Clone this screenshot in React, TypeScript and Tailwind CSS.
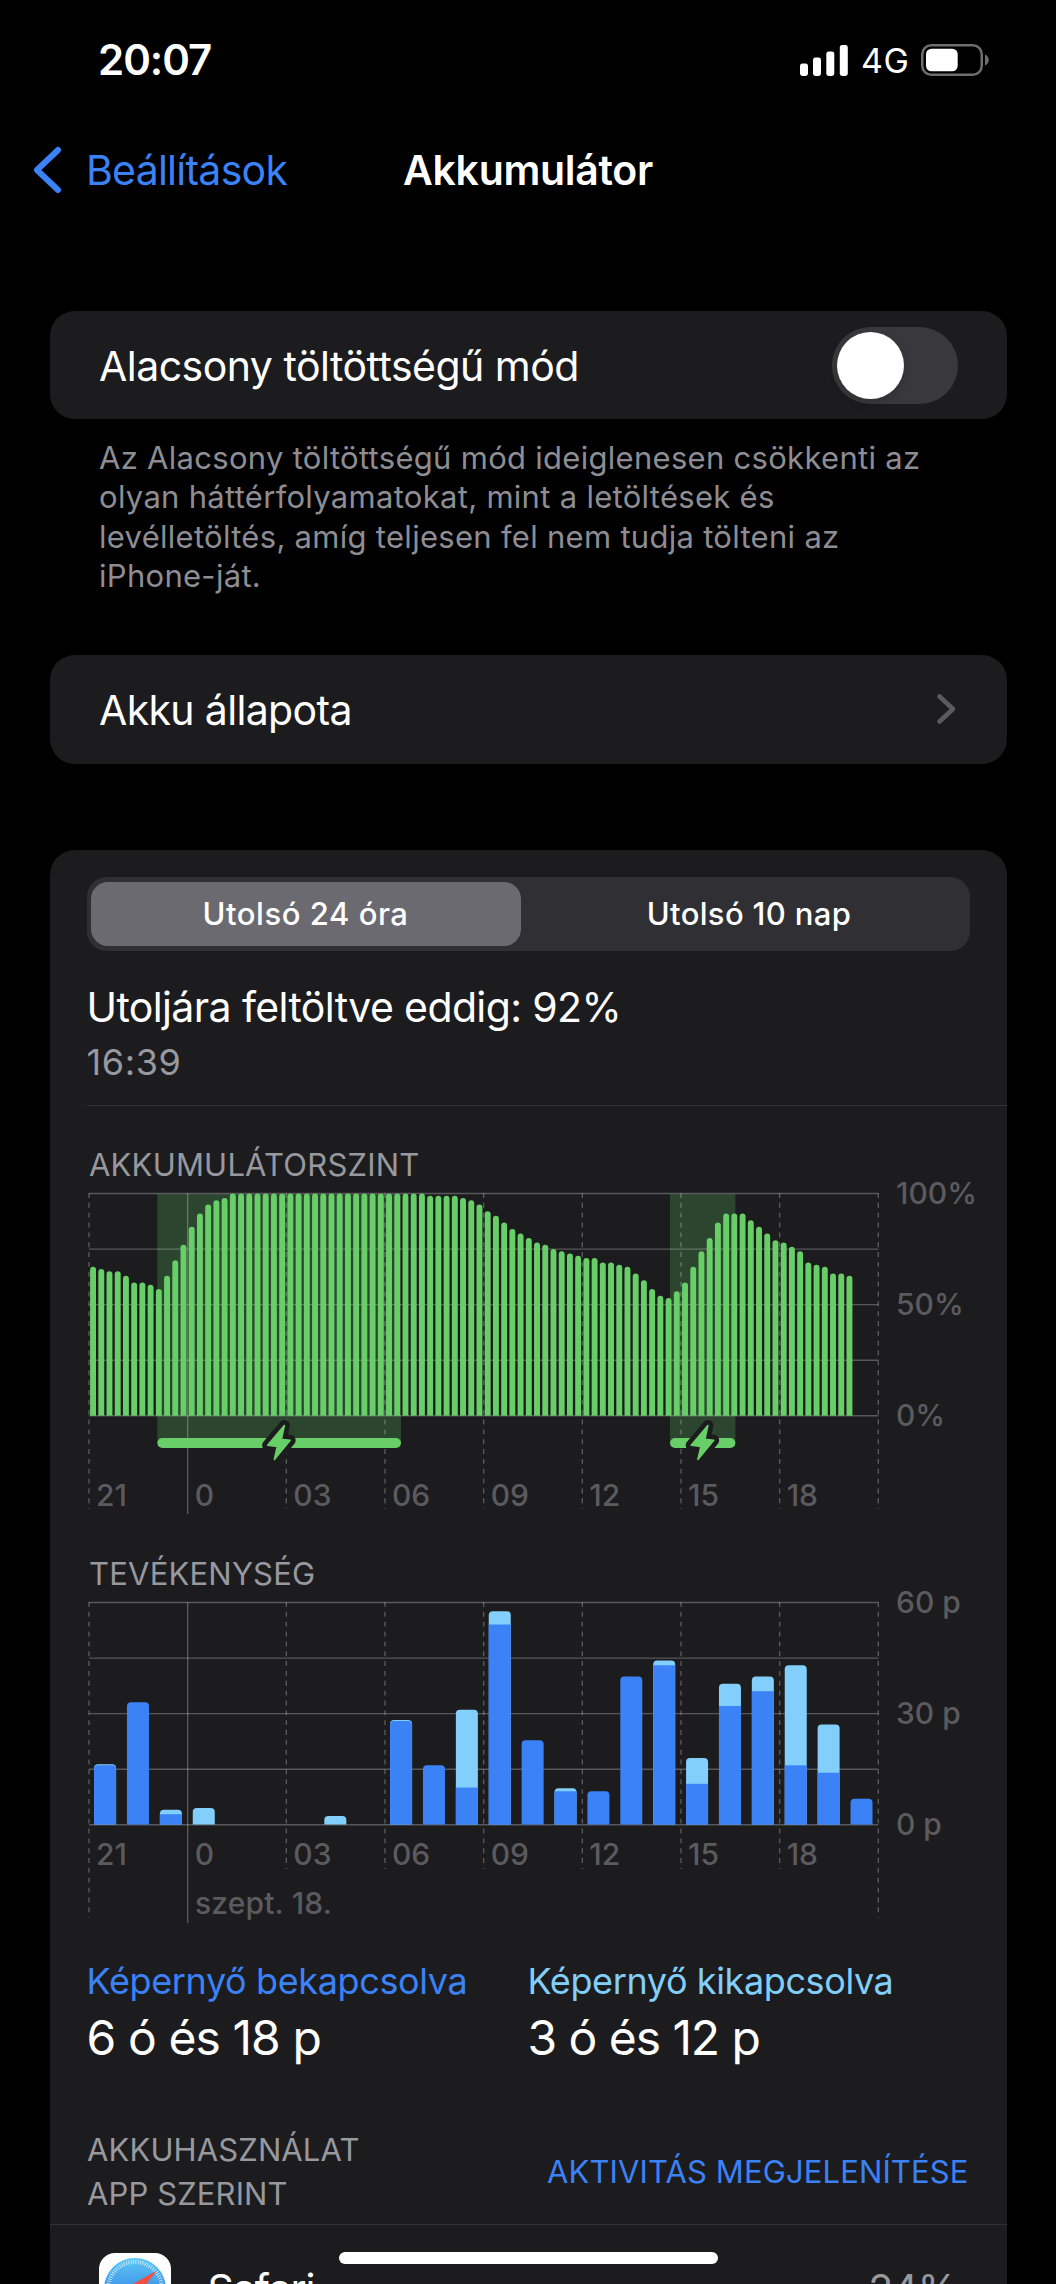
import { ReactNode } from "react";

const PLOT_W = 789.3;
const PLOT_H = 222.3;
const COLUMN = PLOT_W / 8;

const hours = ["21", "0", "03", "06", "09", "12", "15", "18"];

// battery level in percent, one value per 15 minutes
const levels = [
  67, 66, 65, 65, 63, 60, 60, 59, 57, 63, 70, 77, 85, 91, 95, 97, 98, 100, 100,
  100, 100, 100, 100, 100, 100, 100, 100, 100, 100, 100, 100, 100, 100, 100,
  100, 100, 100, 100, 100, 100, 100, 99, 99, 99, 99, 98, 97, 95, 92, 90, 87, 84,
  82, 80, 78, 77, 75, 74, 73, 72, 71, 71, 69, 69, 68, 67, 64, 61, 57, 54, 53,
  56, 60, 67, 74, 80, 87, 91, 91, 91, 88, 85, 82, 79, 78, 76, 74, 69, 68, 67,
  64, 64, 63,
];

const charging = [
  { from: 68.3, to: 312 },
  { from: 581, to: 646.4 },
];

// minutes per hour: [screen on, screen off]
const activity = [
  [16, 0.3],
  [33, 0],
  [2.8, 1.2],
  [0, 4.5],
  [0, 0],
  [0, 0],
  [0, 0],
  [0, 2.3],
  [0, 0],
  [28, 0.2],
  [16, 0],
  [10, 21],
  [54, 3.6],
  [22.8, 0],
  [9, 0.8],
  [9, 0],
  [40, 0],
  [43, 1.3],
  [11, 7],
  [32, 6],
  [36, 4],
  [16, 27],
  [14, 13],
  [7, 0],
];

const StatusBar = () => (
  <div className="flex h-[120px] items-center pl-[98px] pr-[67px]">
    <span className="text-[42px] font-semibold leading-none tracking-[-1.04px]">
      20:07
    </span>
    <svg className="ml-auto h-[31px] w-12" viewBox="0 0 48 31" fill="white">
      <rect x="0" y="18.5" width="8" height="12.5" rx="2.4" />
      <rect x="13" y="12.5" width="8" height="18.5" rx="2.4" />
      <rect x="26.3" y="6.5" width="8" height="24.5" rx="2.4" />
      <rect x="39.8" y="0" width="8" height="31" rx="2.4" />
    </svg>
    <span className="ml-[13px] w-[60px] pt-0.5 text-[34px] leading-none tracking-[0.6px]">
      4G
    </span>
    <svg className="h-8 w-[68px]" viewBox="0 0 68 32">
      <rect
        x="1.25"
        y="1.25"
        width="59.5"
        height="29.5"
        rx="9"
        fill="none"
        stroke="#6e6e6e"
        strokeWidth="2.5"
      />
      <rect x="5" y="4.7" width="31.7" height="22.6" rx="5.5" fill="white" />
      <path d="M64 10.5c5 2 5 9 0 11z" fill="#6e6e6e" />
    </svg>
  </div>
);

const NavBar = () => (
  <div className="grid h-[100px] grid-cols-[1fr_auto_1fr] items-center text-[41px]">
    <div className="flex items-center pl-8 text-[#3b82f6]">
      <svg className="h-12 w-[30px]" viewBox="0 0 30 48" fill="none">
        <path
          d="M26 4 5 24l21 20"
          stroke="currentColor"
          strokeWidth="6"
          strokeLinecap="round"
          strokeLinejoin="round"
        />
      </svg>
      <span className="ml-6 pt-0.5 tracking-[-0.74px]">Beállítások</span>
    </div>
    <h1 className="pt-0.5 font-semibold tracking-[-0.3px]">Akkumulátor</h1>
  </div>
);

const Plot = ({
  title,
  yLabels,
  hourY,
  tickEnd,
  under,
  children,
}: {
  title: string;
  yLabels: string[];
  hourY: number;
  tickEnd: number;
  under?: ReactNode;
  children: ReactNode;
}) => (
  <section>
    <h2 className="h-10 pl-10 pt-px text-[31px] leading-10 tracking-[0.2px] text-[#98989f]">
      {title}
    </h2>
    <svg
      className="ml-10 mt-[9px] h-[321px] w-[918px] overflow-visible"
      viewBox="0 0 918 321"
    >
      {under}
      <g stroke="#ebebf5" strokeOpacity="0.29" strokeWidth="1.4">
        {[0, 1, 2, 3, 4].map((i) => (
          <line
            key={i}
            x1="0"
            x2={PLOT_W}
            y1={0.5 + (i * PLOT_H) / 4}
            y2={0.5 + (i * PLOT_H) / 4}
          />
        ))}
        {[0, 1, 2, 3, 4, 5, 6, 7, 8].map((i) => (
          <line
            key={i}
            x1={i * COLUMN}
            x2={i * COLUMN}
            y1="0"
            y2={i === 1 ? 321 : i === 0 || i === 8 ? 316 : tickEnd}
            strokeDasharray={i === 1 ? undefined : "4.9 4.95"}
          />
        ))}
      </g>
      {children}
      <g fill="#5b5b5f" className="text-[30px] font-medium">
        {hours.map((hour, i) => (
          <text key={hour} x={i * COLUMN + 7} y={hourY}>
            {hour}
          </text>
        ))}
        {yLabels.map((label, i) => (
          <text key={label} x="807" y={10.7 + i * 111.2}>
            {label}
          </text>
        ))}
      </g>
    </svg>
  </section>
);

const LevelChart = () => (
  <Plot
    title="AKKUMULÁTORSZINT"
    yLabels={["100%", "50%", "0%"]}
    hourY={312.5}
    tickEnd={316}
    under={charging.map(({ from, to }) => (
      <rect
        key={from}
        x={from}
        y="1"
        width={to - from}
        height="249"
        fill="#2b452e"
      />
    ))}
  >
    {levels.map((level, i) => {
      const x = 1.1 + (i * COLUMN) / 12;
      const top = 0.5 + PLOT_H * (1 - level / 100);
      return (
        <path
          key={i}
          d={`M${x} ${PLOT_H + 0.5}V${top + 2.95}a2.95 2.95 0 0 1 5.9 0V${PLOT_H + 0.5}z`}
          fill="#68cf68"
        />
      );
    })}
    {charging.map(({ from, to }) => (
      <g key={from} fill="#68cf68">
        <rect x={from} y="245" width={to - from} height="10" rx="5" />
        <g transform={`translate(${(from + to) / 2} 0)`}>
          <path
            d="M5.2 232.5 2.2 246.3 11 247.3-4.8 266.5-1.8 253.5-11.5 252.3z"
            stroke="#1c1c1e"
            strokeWidth="11"
            strokeLinejoin="round"
          />
          <path
            d="M5.2 232.5 2.2 246.3 11 247.3-4.8 266.5-1.8 253.5-11.5 252.3z"
            stroke="#68cf68"
            strokeWidth="1.6"
            strokeLinejoin="round"
          />
        </g>
      </g>
    ))}
  </Plot>
);

const ActivityChart = () => (
  <Plot
    title="TEVÉKENYSÉG"
    yLabels={["60 p", "30 p", "0 p"]}
    hourY={263}
    tickEnd={267}
  >
    {activity.map(([on, off], i) => {
      const x = 5.1 + (i * COLUMN) / 3;
      const base = PLOT_H + 0.3;
      const total = ((on + off) / 60) * PLOT_H;
      const top = base - total;
      if (!total) return null;
      return (
        <g key={i}>
          <path
            d={`M${x} ${base}V${top + 4}q0-4 4-4h14q4 0 4 4V${base}z`}
            fill={off ? "#82cffb" : "#3b82f6"}
          />
          {off > 0.5 && on > 0 && (
            <rect
              x={x}
              y={base - (on / 60) * PLOT_H}
              width="22"
              height={(on / 60) * PLOT_H}
              fill="#3b82f6"
            />
          )}
          {off > 0 && off <= 0.5 && (
            <path
              d={`M${x} ${base}V${top + 5}q0-4 4-4h14q4 0 4 4V${base}z`}
              fill="#3b82f6"
            />
          )}
        </g>
      );
    })}
    <text
      x="106"
      y="311.5"
      fill="#5b5b5f"
      className="text-[30px] font-medium tracking-[0.16px]"
    >
      szept. 18.
    </text>
  </Plot>
);

const SafariIcon = () => (
  <svg className="h-[72px] w-[72px] shrink-0" viewBox="0 0 72 72">
    <defs>
      <linearGradient id="safari" x1="0" y1="0" x2="0" y2="1">
        <stop offset="0" stopColor="#5ec8f2" />
        <stop offset="1" stopColor="#1f62e0" />
      </linearGradient>
    </defs>
    <rect width="72" height="72" rx="16" fill="white" />
    <circle cx="36" cy="36" r="31" fill="url(#safari)" />
    <circle
      cx="36"
      cy="36"
      r="27"
      fill="none"
      stroke="white"
      strokeOpacity="0.8"
      strokeWidth="4"
      strokeDasharray="0.8 1.556"
    />
    <path d="M58 17.5 32 32l8 8z" fill="#f0513f" />
    <path d="M14 54.5 32 32l8 8z" fill="white" />
  </svg>
);

export default function App() {
  return (
    <div className="relative h-[2284px] w-[1056px] overflow-hidden bg-black font-[Inter,sans-serif] text-white">
      <StatusBar />
      <NavBar />

      <main className="mx-[49.5px] mt-[91px]">
        <div className="flex h-[108px] items-center justify-between rounded-[25px] bg-[#1c1c1e] pl-[49.5px] pr-[49px]">
          <span className="pt-[3px] text-[41px] tracking-[-0.52px]">
            Alacsony töltöttségű mód
          </span>
          <div className="h-[77px] w-[126px] rounded-full bg-[#39393d] p-[5px]">
            <div className="h-[67px] w-[67px] rounded-full bg-white shadow-[0_4px_10px_rgba(0,0,0,0.15)]" />
          </div>
        </div>
        <p className="mt-[19px] pl-[49.5px] text-[31px] leading-[39.4px] tracking-[0.29px] text-[#8d8d93]">
          Az Alacsony töltöttségű mód ideiglenesen csökkenti az
          <br />
          olyan háttérfolyamatokat, mint a letöltések és
          <br />
          levélletöltés, amíg teljesen fel nem tudja tölteni az
          <br />
          iPhone-ját.
        </p>

        <div className="mt-[59px] flex h-[109px] items-center justify-between rounded-[25px] bg-[#1c1c1e] px-[49.5px]">
          <span className="pt-[3px] text-[41px] tracking-[-0.65px]">
            Akku állapota
          </span>
          <svg className="h-8 w-[22px]" viewBox="0 0 22 32" fill="none">
            <path
              d="M4.5 3.5 18 16 4.5 28.5"
              stroke="#5b5b5f"
              strokeWidth="4.6"
              strokeLinecap="round"
              strokeLinejoin="round"
            />
          </svg>
        </div>

        <div className="mt-[86px] rounded-t-[25px] bg-[#1c1c1e] pt-[27px]">
          <div className="mx-[37px] flex h-[74px] items-center gap-2 rounded-[20px] bg-[#303034] pl-1 text-[31px] font-medium">
            <div className="flex h-16 w-[430px] items-center justify-center rounded-[17px] bg-[#6b6a70] pt-0.5 tracking-[0.55px]">
              Utolsó 24 óra
            </div>
            <div className="flex-1 pt-0.5 text-center tracking-[0.35px]">
              Utolsó 10 nap
            </div>
          </div>
          <div className="ml-[37px] mt-[26px] border-b border-[#323235] pb-[18px]">
            <p className="text-[41px] leading-[60px] tracking-[-0.62px]">
              Utoljára feltöltve eddig: 92%
            </p>
            <p className="text-4xl leading-[50px] tracking-[0.6px] text-[#98989f]">
              16:39
            </p>
          </div>

          <div className="-ml-[0.5px] mt-[38px] flex flex-col gap-[39px]">
            <LevelChart />
            <ActivityChart />
          </div>

          <div className="mt-[33px] grid grid-cols-[441px_1fr] pl-[37px]">
            <div>
              <p className="text-4xl leading-[50px] tracking-[-0.37px] text-[#3b82f6]">
                Képernyő bekapcsolva
              </p>
              <p className="text-5xl leading-[64px] tracking-[-0.91px]">
                6 ó és 18 p
              </p>
            </div>
            <div>
              <p className="text-4xl leading-[50px] tracking-[-0.39px] text-[#82cffb]">
                Képernyő kikapcsolva
              </p>
              <p className="text-5xl leading-[64px] tracking-[-1.05px]">
                3 ó és 12 p
              </p>
            </div>
          </div>

          <div className="mt-[58px] flex items-center justify-between border-b border-[#323235] pb-2 pl-[37.5px] pr-[38px] text-[31px] leading-[44.4px] tracking-[0.12px]">
            <div className="text-[#98989f]">
              AKKUHASZNÁLAT
              <br />
              APP SZERINT
            </div>
            <span className="text-[#3b82f6]">AKTIVITÁS MEGJELENÍTÉSE</span>
          </div>

          <div className="flex items-center px-[49px] pt-7 text-[41px]">
            <SafariIcon />
            <span className="ml-[37px] tracking-[-0.99px]">Safari</span>
            <span className="ml-auto tracking-[-0.6px] text-[#98989f]">
              24%
            </span>
          </div>
        </div>
      </main>

      <div className="absolute bottom-5 left-[339px] h-3 w-[379px] rounded-full bg-white" />
    </div>
  );
}
